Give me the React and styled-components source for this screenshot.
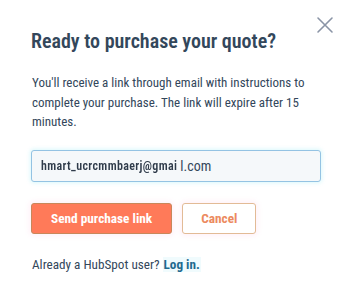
import styled, { createGlobalStyle } from "styled-components";

const Global = createGlobalStyle`
  html, body {
    margin: 0;
    padding: 0;
    background: #fff;
  }
  body {
    font-family: "Roboto", "Liberation Sans", sans-serif;
    font-stretch: 80%;
    color: #33475b;
  }
`;

const Modal = styled.div`
  position: relative;
  width: 350px;
  height: 306px;
  box-sizing: border-box;
  padding: 28px 29px 0 31px;
  background: #fff;
`;

const Close = styled.button`
  position: absolute;
  top: 16px;
  right: 16px;
  width: 18px;
  height: 18px;
  padding: 0;
  border: none;
  background: none;
  cursor: pointer;
`;

const Title = styled.h1`
  margin: 0;
  font-size: 20px;
  font-weight: 600;
  line-height: 26px;
  color: #33475b;
`;

const Body = styled.p`
  margin: 19px 0 0 1px;
  font-size: 13px;
  line-height: 19.5px;
  color: #33475b;
`;

const Input = styled.div`
  margin-top: 18px;
  height: 32px;
  box-sizing: border-box;
  display: flex;
  align-items: center;
  gap: 3px;
  padding: 0 9px;
  background: #f5f8fa;
  border: 1px solid #94c3e3;
  border-radius: 3px;
  box-shadow: 0 0 4px 1px rgba(0, 208, 228, 0.15);
  font-size: 14px;
  color: #33475b;
`;

const Blurred = styled.span`
  display: inline-block;
  filter: blur(0.5px);
  color: #2f3b4a;
  font-size: 12px;
  font-weight: 600;
  letter-spacing: 0.35px;
`;

const Actions = styled.div`
  display: flex;
  gap: 10px;
  margin-top: 21px;
`;

const Button = styled.button`
  height: 31px;
  box-sizing: border-box;
  padding: 0 ${(p) => (p.$primary ? "19px" : "18px")};
  border-radius: 3px;
  font-family: inherit;
  font-stretch: inherit;
  font-size: 13.3px;
  font-weight: 700;
  cursor: pointer;
  border: 1px solid ${(p) => (p.$primary ? "#c8875a" : "#e2bb96")};
  background: ${(p) => (p.$primary ? "#ff7a59" : "#fff")};
  color: ${(p) => (p.$primary ? "#fff" : "#ec8a60")};
  box-shadow: 0 0 5px 2px rgba(255, 140, 200, 0.12);
`;

const Footer = styled.p`
  margin: 23px 0 0 1px;
  font-size: 13.2px;
  color: #33475b;
`;

const Link = styled.a`
  color: #1f6a8f;
  font-weight: 700;
  text-decoration: none;
  background: #f0fbfd;
  padding: 0 1px;
`;

export default function App() {
  return (
    <>
      <Global />
      <Modal>
        <Close aria-label="Close">
          <svg width="18" height="18" viewBox="0 0 18 18">
            <path d="M2 2 L16 16 M16 2 L2 16" stroke="#8a94a6" strokeWidth="1.6" strokeLinecap="round" />
          </svg>
        </Close>
        <Title>Ready to purchase your quote?</Title>
        <Body>
          You'll receive a link through email with instructions to complete your
          purchase. The link will expire after 15 minutes.
        </Body>
        <Input>
          <Blurred>hmart_ucrcmmbaerj@gmai</Blurred>
          <span>l.com</span>
        </Input>
        <Actions>
          <Button $primary>Send purchase link</Button>
          <Button>Cancel</Button>
        </Actions>
        <Footer>
          Already a HubSpot user? <Link href="#">Log in.</Link>
        </Footer>
      </Modal>
    </>
  );
}
